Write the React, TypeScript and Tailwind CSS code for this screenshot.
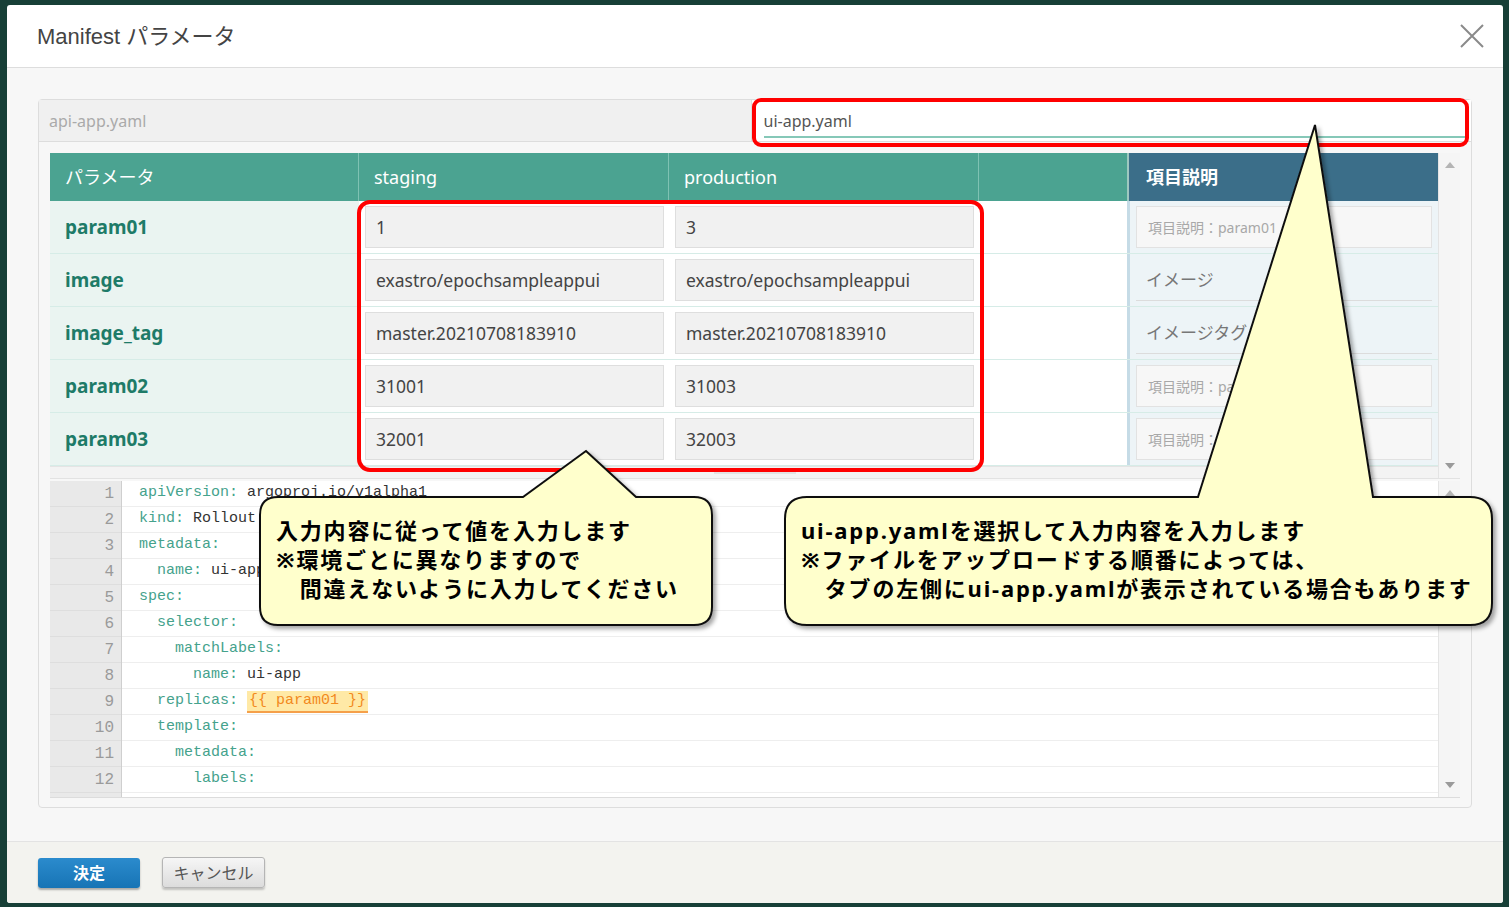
import React from "react";

type Row = { name: string; stg: string; prd: string; desc: string; boxed: boolean };

const rows: Row[] = [
  { name: "param01", stg: "1", prd: "3", desc: "項目説明：param01", boxed: true },
  { name: "image", stg: "exastro/epochsampleappui", prd: "exastro/epochsampleappui", desc: "イメージ", boxed: false },
  { name: "image_tag", stg: "master.20210708183910", prd: "master.20210708183910", desc: "イメージタグ", boxed: false },
  { name: "param02", stg: "31001", prd: "31003", desc: "項目説明：param02", boxed: true },
  { name: "param03", stg: "32001", prd: "32003", desc: "項目説明：param03", boxed: true },
];

type Line = { indent: number; key: string; value?: string; tpl?: string };

const code: Line[] = [
  { indent: 0, key: "apiVersion", value: "argoproj.io/v1alpha1" },
  { indent: 0, key: "kind", value: "Rollout" },
  { indent: 0, key: "metadata" },
  { indent: 1, key: "name", value: "ui-app" },
  { indent: 0, key: "spec" },
  { indent: 1, key: "selector" },
  { indent: 2, key: "matchLabels" },
  { indent: 3, key: "name", value: "ui-app" },
  { indent: 1, key: "replicas", tpl: "{{ param01 }}" },
  { indent: 1, key: "template" },
  { indent: 2, key: "metadata" },
  { indent: 3, key: "labels" },
  { indent: 4, key: "app", value: "ui-app" },
];

function Arrow({ up }: { up?: boolean }) {
  return up ? (
    <div className="w-0 h-0 border-x-[5px] border-x-transparent border-b-[6px] border-b-[#b4b4b4]" />
  ) : (
    <div className="w-0 h-0 border-x-[5px] border-x-transparent border-t-[6px] border-t-[#9a9a9a]" />
  );
}

function ScrollBar() {
  return (
    <div className="w-[22px] shrink-0 flex flex-col justify-between items-center bg-[#f5f5f5] border-l border-[#e4e4e4] py-[9px]">
      <Arrow up />
      <Arrow />
    </div>
  );
}

function ParamTable() {
  return (
    <div className="flex h-[326px] border-b border-[#e2e2e2]">
      <div className="w-[1388px] flex flex-col">
        <div className="grid grid-cols-[309px_310px_310px_150px_309px] h-[48px] shrink-0 bg-[#4ba391] text-white text-[18px]">
          <div className="flex items-center pl-[15px] border-r border-[#7fc2b3]">パラメータ</div>
          <div className="flex items-center pl-[15px] border-r border-[#7fc2b3]">staging</div>
          <div className="flex items-center pl-[15px] border-r border-[#7fc2b3]">production</div>
          <div className="border-r-2 border-[#9dc8c0]" />
          <div className="flex items-center pl-[17px] bg-[#3b6e89] font-bold">項目説明</div>
        </div>
        {rows.map((r) => (
          <div
            key={r.name}
            className="grid grid-cols-[309px_310px_310px_150px_309px] h-[53px] shrink-0 border-b border-[#d6ece7]"
          >
            <div className="flex items-center pl-[15px] bg-[#eaf4f1] text-[#1e7b68] text-[19px] font-bold">
              {r.name}
            </div>
            <div className="bg-white pl-[6px] pr-[5px] py-[5px]">
              <div className="h-full flex items-center px-[10px] bg-[#f1f1f1] border border-[#dedede] text-[#444] text-[17.5px]">
                {r.stg}
              </div>
            </div>
            <div className="bg-white pl-[6px] pr-[5px] py-[5px]">
              <div className="h-full flex items-center px-[10px] bg-[#f1f1f1] border border-[#dedede] text-[#444] text-[17.5px]">
                {r.prd}
              </div>
            </div>
            <div className="bg-white border-r-2 border-[#c5dbe6]" />
            <div className="bg-[#edf4f7] border-l border-[#c5dbe6] pl-[6px] pr-[6px] py-[5px]">
              {r.boxed ? (
                <div className="h-full flex items-center px-[11px] bg-[#f7f7f7] border border-[#e2e2e2] text-[#a8a8a8] text-[14px]">
                  {r.desc}
                </div>
              ) : (
                <div className="h-full flex items-center px-[10px] border-b border-[#dcdcdc] text-[#777] text-[17px]">
                  {r.desc}
                </div>
              )}
            </div>
          </div>
        ))}
        <div className="flex-1 bg-[#f3f3f3] border-t border-[#e4e4e4] relative">
          <div className="absolute left-[664px] top-[3px] w-[82px] h-[4px] bg-[#e2e2e2]" />
        </div>
      </div>
      <ScrollBar />
    </div>
  );
}

function Editor() {
  return (
    <div className="flex h-[317px] mt-[2px] border-b border-[#dcdcdc] overflow-hidden">
      <div className="w-[72px] shrink-0 bg-[#e9e9e9] border-r border-[#cfcfcf] overflow-hidden">
        {code.map((_, i) => (
          <div
            key={i}
            className="h-[26px] flex items-center justify-end pr-[7px] border-b border-[#dedede] text-[#9a9a9a] text-[16px] font-['Liberation_Mono',monospace]"
          >
            {i + 1}
          </div>
        ))}
      </div>
      <div className="flex-1 bg-white overflow-hidden">
        {code.map((l, i) => (
          <div
            key={i}
            className="h-[26px] flex items-center pl-[17px] border-b border-[#eeeeee] text-[15px] font-['Liberation_Mono',monospace] whitespace-pre"
          >
            <span className="text-[#45a28c]">{"  ".repeat(l.indent) + l.key + ": "}</span>
            {l.value && <span className="text-[#333]">{l.value}</span>}
            {l.tpl && (
              <span className="bg-[#ffe9a6] text-[#f28a1e] border-b-2 border-[#f5a04a] px-[2px] leading-[20px]">
                {l.tpl}
              </span>
            )}
          </div>
        ))}
      </div>
      <ScrollBar />
    </div>
  );
}

function Overlays() {
  return (
    <>
      <div className="absolute left-[752px] top-[98px] w-[717px] h-[49px] border-4 border-[#ff0000] rounded-[9px]" />
      <div className="absolute left-[357px] top-[200px] w-[627px] h-[272px] border-4 border-[#ff0000] rounded-[13px]" />
      <svg className="absolute left-0 top-0 pointer-events-none" width="1509" height="907">
        <defs>
          <filter id="sh" x="-10%" y="-10%" width="120%" height="130%">
            <feDropShadow dx="3" dy="3" stdDeviation="2" floodColor="#000" floodOpacity="0.35" />
          </filter>
        </defs>
        <path
          d="M 278 497 L 523 497 L 586 451 L 636 497 L 694 497 Q 712 497 712 515 L 712 607 Q 712 625 694 625 L 278 625 Q 260 625 260 607 L 260 515 Q 260 497 278 497 Z"
          fill="#ffffcc"
          stroke="#111"
          strokeWidth="2"
          filter="url(#sh)"
        />
        <path
          d="M 807 497 L 1198 497 L 1315 125 L 1373 497 L 1470 497 Q 1492 497 1492 519 L 1492 603 Q 1492 625 1470 625 L 807 625 Q 785 625 785 603 L 785 519 Q 785 497 807 497 Z"
          fill="#ffffcc"
          stroke="#111"
          strokeWidth="2"
          filter="url(#sh)"
        />
      </svg>
      <div className="absolute left-[276px] top-[516px] text-[22px] leading-[29px] font-bold text-black tracking-[1.8px] whitespace-pre">
        <div>入力内容に従って値を入力します</div>
        <div>※環境ごとに異なりますので</div>
        <div>　間違えないように入力してください</div>
      </div>
      <div className="absolute left-[801px] top-[516px] text-[22px] leading-[29px] font-bold text-black tracking-[1.8px] whitespace-pre">
        <div>ui-app.yamlを選択して入力内容を入力します</div>
        <div>※ファイルをアップロードする順番によっては、</div>
        <div>　タブの左側にui-app.yamlが表示されている場合もあります</div>
      </div>
    </>
  );
}

export default function App() {
  return (
    <div className="relative w-[1509px] h-[907px] bg-[#173f37] pt-[5px] pl-[7px] overflow-hidden font-['Noto_Sans','Noto_Sans_CJK_JP',sans-serif]">
      <div className="w-[1496px] h-[898px] flex flex-col bg-white rounded-[3px] overflow-hidden">
        <div className="h-[63px] shrink-0 flex items-center justify-between pl-[30px] pr-[18px] border-b border-[#dddddd]">
          <div className="text-[22px] text-[#444] font-['Liberation_Sans','Noto_Sans_CJK_JP',sans-serif]">
            Manifest パラメータ
          </div>
          <svg width="26" height="26" viewBox="0 0 26 26">
            <path d="M2 2 L24 24 M24 2 L2 24" stroke="#8a8a8a" strokeWidth="2" />
          </svg>
        </div>
        <div className="flex-1 bg-[#f7f7f7] pt-[31px] px-[31px]">
          <div className="h-[709px] border border-[#dddddd] rounded-[4px] flex flex-col">
            <div className="h-[42px] shrink-0 flex border-b border-[#dddddd] text-[16px]">
              <div className="flex-1 flex items-center pl-[10px] bg-[#f0f0f0] text-[#aaa] border-r border-[#dddddd]">
                api-app.yaml
              </div>
              <div className="flex-1 bg-white pl-[12px] pr-[6px] pt-[6px]">
                <div className="h-[32px] flex items-center text-[#555] border-b-2 border-[#86c8b8]">ui-app.yaml</div>
              </div>
            </div>
            <div className="px-[11px] pt-[11px]">
              <ParamTable />
              <Editor />
            </div>
          </div>
        </div>
        <div className="h-[62px] shrink-0 bg-[#f3f3ef] border-t border-[#e3e3e3] flex items-center pl-[31px] gap-[22px]">
          <div className="w-[102px] h-[30px] flex items-center justify-center rounded-[3px] bg-[linear-gradient(#2b8bcd,#1774b5)] text-white font-bold text-[16px] shadow-[0_2px_2px_rgba(0,0,0,0.3)]">
            決定
          </div>
          <div className="w-[103px] h-[31px] flex items-center justify-center rounded-[3px] border border-[#b5b5b5] bg-[linear-gradient(#f6f6f6,#dcdcdc)] text-[#555] text-[16px] shadow-[0_2px_2px_rgba(0,0,0,0.2)]">
            キャンセル
          </div>
        </div>
      </div>
      <Overlays />
    </div>
  );
}
